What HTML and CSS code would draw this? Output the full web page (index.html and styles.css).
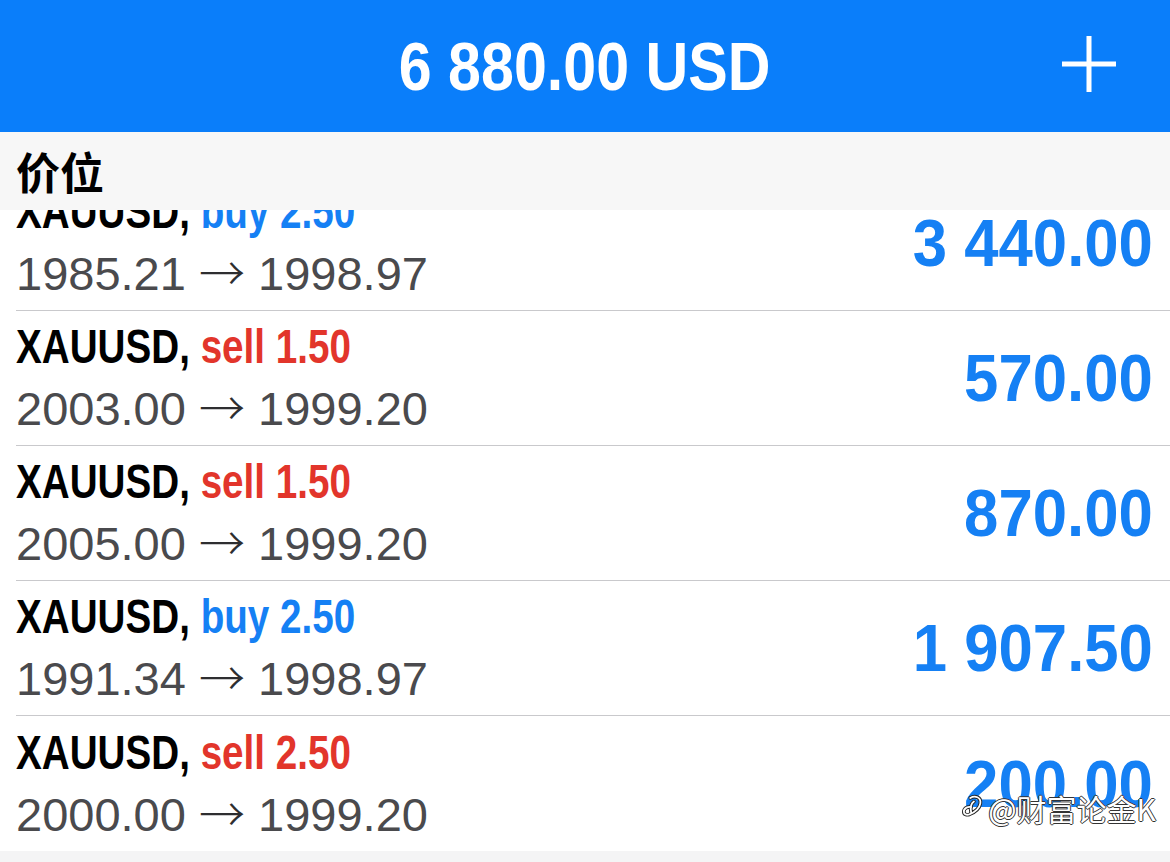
FILE: index.html
```html
<!DOCTYPE html>
<html lang="zh-CN">
<head>
    <meta charset="UTF-8">
    <meta name="viewport" content="width=device-width, initial-scale=1.0">
    <title>Trade</title>
    <link rel="stylesheet" href="styles.css">
</head>
<body>
    <div class="screen">
        <div class="topbar">
            <div></div>
            <div class="balance"><span class="balance-text">6 880.00 USD</span></div>
            <div class="topbar-right">
                <svg class="add-icon" viewBox="0 0 54 56" xmlns="http://www.w3.org/2000/svg">
                    <path d="M27 0v56M0 28h54" stroke="#fff" stroke-width="5" fill="none" />
                </svg>
            </div>
        </div>
        <div class="section-title">价位</div>
        <div class="list-viewport">
            <div class="positions">
                <!-- rows inserted below -->
            </div>
        </div>
        <div class="watermark">
            <svg class="weibo-icon" viewBox="0 0 24 30" xmlns="http://www.w3.org/2000/svg">
                <path d="M9 4c5-3 12-1 11 6-1 6-7 10-12 12-3 1-6 0-6-3 0-4 5-6 8-5M13 8c-3 2-4 7-3 12" stroke="#222" stroke-width="4" fill="none" stroke-linecap="round" />
                <path d="M9 4c5-3 12-1 11 6-1 6-7 10-12 12-3 1-6 0-6-3 0-4 5-6 8-5M13 8c-3 2-4 7-3 12" stroke="#fff" stroke-width="2" fill="none" stroke-linecap="round" />
            </svg>
            <span>@财富论金K</span>
        </div>
    </div>

    <script>
        const positions = [
            { side: 'buy', lots: '2.50', open: '1985.21', close: '1998.97', profit: '3 440.00' },
            { side: 'sell', lots: '1.50', open: '2003.00', close: '1999.20', profit: '570.00' },
            { side: 'sell', lots: '1.50', open: '2005.00', close: '1999.20', profit: '870.00' },
            { side: 'buy', lots: '2.50', open: '1991.34', close: '1998.97', profit: '1 907.50' },
            { side: 'sell', lots: '2.50', open: '2000.00', close: '1999.20', profit: '200.00' },
        ];

        const list = document.querySelector('.positions');

        positions.forEach(p => {
            const row = document.createElement('div');
            row.className = 'position';
            row.innerHTML = `
                <div class="position-left">
                    <div class="position-title"><span class="cond">XAUUSD, <span class="side-${p.side}">${p.side} ${p.lots}</span></span></div>
                    <div class="position-prices">${p.open} <span class="arrow">→</span> ${p.close}</div>
                </div>
                <div class="position-profit"><span class="cond-right">${p.profit}</span></div>
            `;
            list.appendChild(row);
        });
    </script>
</body>
</html>
```

FILE: styles.css
```css
body {
    margin: 0;
    padding: 0;
    font-family: "Liberation Sans", Arial, sans-serif;
    background-color: #f4f4f5;
}
.screen {
    position: relative;
    width: 1170px;
    height: 862px;
    overflow: hidden;
    background-color: #f4f4f5;
}
.topbar {
    height: 132px;
    background-color: #0a7efa;
    display: grid;
    grid-template-columns: 1fr auto 1fr;
    align-items: center;
    color: white;
}
.balance {
    font-size: 68px;
    font-weight: bold;
    line-height: 1;
    text-align: center;
}
.balance-text {
    display: inline-block;
    white-space: nowrap;
    transform: scaleX(0.87);
    transform-origin: center;
}
.topbar-right {
    display: flex;
    justify-content: flex-end;
    padding-right: 54px;
    padding-bottom: 4px;
}
.add-icon {
    width: 54px;
    height: 56px;
    display: block;
}
.section-title {
    height: 78px;
    background-color: #f7f7f7;
    display: flex;
    align-items: center;
    padding-left: 16px;
    font-family: "Noto Sans CJK SC", sans-serif;
    font-size: 44px;
    font-weight: bold;
    color: #000;
}
.list-viewport {
    height: 641px;
    overflow: hidden;
    background-color: white;
}
.positions {
    margin-top: -34px;
}
.position {
    height: 134px;
    display: flex;
    justify-content: space-between;
    align-items: center;
    margin-left: 16px;
    padding-right: 17px;
    border-bottom: 1px solid #c9c9cc;
}
.position:last-child {
    border-bottom: none;
    height: 135px;
}
.position-title {
    font-size: 48px;
    font-weight: bold;
    line-height: 56px;
    color: #000;
}
.cond {
    display: inline-block;
    white-space: nowrap;
    transform: scaleX(0.805);
    transform-origin: left center;
}
.side-buy { color: #1580f4; }
.side-sell { color: #e2352b; }
.position-prices {
    margin-top: 6px;
    font-size: 47px;
    line-height: 56px;
    color: #4a4a4d;
    white-space: nowrap;
}
.arrow {
    font-family: "Noto Sans CJK SC", sans-serif;
    font-weight: 300;
    font-size: 46px;
    line-height: 1;
    color: #2e2e30;
}
.position-profit {
    font-size: 66px;
    font-weight: bold;
    line-height: 66px;
    color: #1580f4;
}
.cond-right {
    display: inline-block;
    white-space: nowrap;
    transform: scaleX(0.935);
    transform-origin: right center;
}
.watermark {
    position: absolute;
    right: 14px;
    bottom: 32px;
    display: flex;
    align-items: center;
    gap: 4px;
    font-family: "Noto Sans CJK SC", sans-serif;
    font-size: 30px;
    color: white;
    text-shadow: -1px 0 #333, 1px 0 #333, 0 -1px #333, 0 1px #333;
}
.weibo-icon {
    width: 22px;
    height: 30px;
}
```
